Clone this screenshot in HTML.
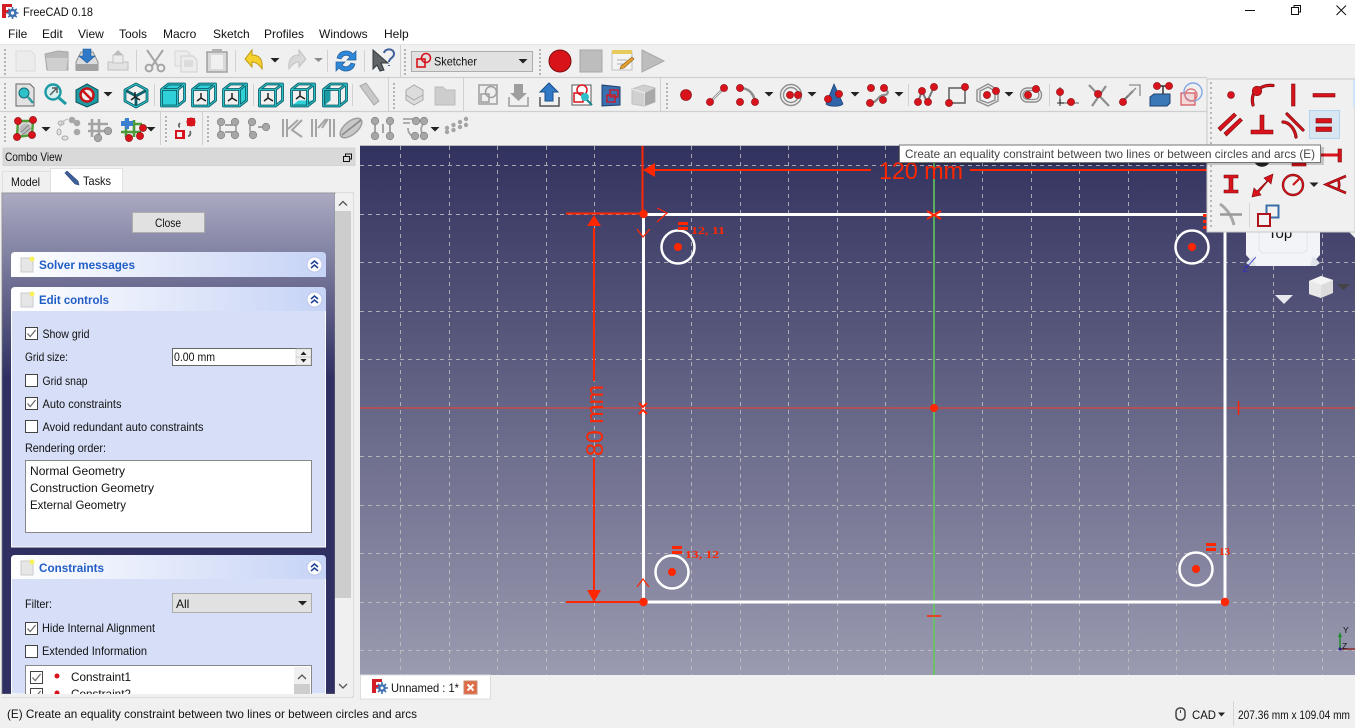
<!DOCTYPE html>
<html><head><meta charset="utf-8"><title>FreeCAD 0.18</title>
<style>
html,body{margin:0;padding:0;background:#f0f0f0;width:1355px;height:728px;overflow:hidden}
svg{display:block;position:absolute;left:0;top:0}
text{font-family:"Liberation Sans",sans-serif;font-size:12px;fill:#111}
.m{font-size:12px}
.l{font-size:12px}
.t{font-size:11.5px;font-weight:bold;fill:#215dc6}
.rd{fill:#d8131b;stroke:#7d0b10;stroke-width:.6}
</style></head><body>
<svg width="1355" height="728" viewBox="0 0 1355 728" xmlns="http://www.w3.org/2000/svg">
<defs>
<linearGradient id="vp" x1="0" y1="0" x2="0" y2="1"><stop offset="0" stop-color="#32325f"/><stop offset="1" stop-color="#9a9ab0"/></linearGradient>
<linearGradient id="tp" x1="0" y1="0" x2="0" y2="1"><stop offset="0" stop-color="#aaaac2"/><stop offset=".37" stop-color="#2f2f62"/><stop offset="1" stop-color="#2f2f62"/></linearGradient>
<linearGradient id="hd" x1="0" y1="0" x2="1" y2="0"><stop offset="0" stop-color="#fff"/><stop offset="1" stop-color="#c6d3f6"/></linearGradient>
<clipPath id="cl"><rect x="26" y="666" width="268" height="28"/></clipPath>
<clipPath id="nav"><rect x="1240" y="232" width="90" height="40"/></clipPath>

<g id="dot"><circle r="5.7" fill="#d8131b" stroke="#8a0b10" stroke-width=".8"/></g>
<g id="arw"><path d="M-4.500-2H4.500L0 2.500Z" fill="#222"/></g>
<g id="grip" fill="#b4b4b4"><rect x="0" y="0" width="2" height="2"/><rect x="0" y="4" width="2" height="2"/><rect x="0" y="8" width="2" height="2"/><rect x="0" y="12" width="2" height="2"/><rect x="0" y="16" width="2" height="2"/><rect x="0" y="20" width="2" height="2"/><rect x="0" y="24" width="2" height="2"/></g>

<g id="cubeS"><path d="M-11.500-5.500L-4.500-11H11.500V5.500L4.500 11H-11.500ZM-11.500-5.500H4.500V11M4.500-5.500L11.500-11" fill="none" stroke="#0d5f67" stroke-width="2.800" stroke-linejoin="round"/><path d="M-11.500-5.500L-4.500-11H11.500V5.500L4.500 11H-11.500ZM-11.500-5.500H4.500V11M4.500-5.500L11.500-11" fill="none" stroke="#2ac2ca" stroke-width="1.100" stroke-linejoin="round"/></g>
<g id="cdot" fill="none" stroke="#222" stroke-width="1.500"><path d="M-3 0L-7 3M-3 0V-5M-3 0L2 3"/></g>
<g id="ball"><circle r="3.600" fill="#d8131b" stroke="#8a0b10" stroke-width=".6"/></g>
<g id="gball"><circle r="3.800" fill="#a6a6a6" stroke="#7e7e7e" stroke-width=".6"/></g>
<g id="chev" fill="none" stroke="#1c3f94" stroke-width="1.500"><circle r="7.500" fill="#fff" stroke="#b9c6ea" stroke-width="1"/><path d="M-3.500-.5L0-3.500 3.500-.5M-3.500 3.500L0 .5 3.500 3.500"/></g>
<g id="note"><rect x="0" y="2" width="12" height="14" fill="#e6e6e6" stroke="#cacaca"/><circle cx="11" cy="3" r="2.500" fill="#f7f15a"/></g>
<g id="cbox"><rect x=".5" y=".5" width="12" height="12" fill="#fff" stroke="#444"/></g>
<g id="cchk"><rect x=".5" y=".5" width="12" height="12" fill="#fff" stroke="#444"/><path d="M2.500 6.500L5.200 9.600 10.600 3" fill="none" stroke="#666" stroke-width="1.200"/></g>
</defs>

<!-- base / title / menu -->
<rect width="1355" height="728" fill="#f0f0f0"/>
<rect width="1355" height="44" fill="#fff"/>
<path d="M2 4H12V7H6V10H10V13H6V18H2Z" fill="#d21f26"/>
<path d="M12.500 7V19M6.500 13H18.500M8.300 8.800L16.700 17.200M16.700 8.800L8.300 17.200" stroke="#3f6fb0" stroke-width="1.600"/><circle cx="12.500" cy="13" r="4.300" fill="#3f6fb0"/><circle cx="12.500" cy="13" r="1.700" fill="#fff"/>
<text x="23" y="16" class="m" textLength="70" lengthAdjust="spacingAndGlyphs">FreeCAD 0.18</text>
<path d="M1245 10.500H1255" stroke="#111"/>
<path d="M1291.500 7.500H1298.500V14.500H1291.500ZM1294 7.500V5.500H1300.500V12H1298.500" fill="none" stroke="#111"/>
<path d="M1336.500 5.500L1346 15M1346 5.500L1336.500 15" stroke="#111"/>
<text x="8" y="38" class="m">File</text><text x="42" y="38" class="m">Edit</text><text x="78" y="38" class="m">View</text><text x="119" y="38" class="m">Tools</text><text x="163" y="38" class="m">Macro</text><text x="213" y="38" class="m">Sketch</text><text x="264" y="38" class="m">Profiles</text><text x="319" y="38" class="m">Windows</text><text x="384" y="38" class="m">Help</text>

<!-- toolbars bg -->
<rect y="44" width="1355" height="101" fill="#f0f0f0"/>
<path d="M0 44.500H1355" stroke="#e6e6e6"/>
<path d="M0 77.500H1207M0 111.500H1207" stroke="#cfcfcf" stroke-width="1.200"/>
<path d="M400.500 45V77M388.500 78V111" stroke="#d0d0d0"/>
<path d="M160.500 112V145M202.500 112V145M463.500 78V111M660.500 78V111" stroke="#d0d0d0"/>
<path d="M136.500 50V72M235.500 50V72M327.500 50V72M364.500 50V72M154.500 84V106M253.500 84V106M352.500 84V106M908.500 84V106M1049.500 84V106" stroke="#d0d0d0"/>
<use href="#grip" x="4" y="49"/><use href="#grip" x="404" y="49"/><use href="#grip" x="539" y="49"/>
<use href="#grip" x="4" y="83"/><use href="#grip" x="393" y="83"/><use href="#grip" x="666" y="83"/>
<use href="#grip" x="4" y="116"/><use href="#grip" x="165" y="116"/><use href="#grip" x="207" y="116"/>

<!-- row 1 -->
<path d="M16 51H31L35 55V71H16Z" fill="#ececec" stroke="#dcdcdc"/>
<path d="M45 54L58 51 68 52V70H47Z" fill="#b9b9b9" stroke="#a8a8a8"/><path d="M46 58H68L66 70H48Z" fill="#cfcfcf"/>
<path d="M76 62L81 52H93L98 62V70H76Z" fill="#dcdcdc" stroke="#8e8e8e"/><rect x="76" y="64" width="22" height="7" fill="#a2a2a2"/><path d="M83 49H91V56H95L87 63 79 56H83Z" fill="#2f79c7" stroke="#1d5a9c" stroke-width=".6"/>
<path d="M108 62H128V70H108Z" fill="#e2e2e2" stroke="#c0c0c0"/><path d="M113 63V55H123V63Z" fill="#ececec" stroke="#c4c4c4"/><path d="M118 50L113 55H123Z" fill="#bcbcbc"/>
<g fill="none" stroke="#a6a6a6" stroke-width="2"><path d="M147 50L158 66M163 50L152 66"/><circle cx="149" cy="68" r="3.400"/><circle cx="161" cy="68" r="3.400"/></g>
<path d="M175 51H187L190 54V66H175Z" fill="#ececec" stroke="#d6d6d6"/><path d="M181 56H193L197 60V72H181Z" fill="#ececec" stroke="#d0d0d0"/><rect x="184" y="60" width="9" height="7" fill="#dcdcdc"/>
<rect x="207" y="52" width="20" height="20" fill="#d8d8d8" stroke="#a0a0a0" stroke-width="1.500"/><rect x="211" y="55" width="12" height="14" fill="#f0f0f0"/><rect x="212" y="49" width="10" height="4" fill="#b2b2b2"/>
<path d="M245 59L252 50V55C260 55 263 60 262 69 259 64 256 62 252 62V67Z" fill="#f4d12e" stroke="#bf9a15"/>
<use href="#arw" x="275" y="60"/>
<path d="M306 59L299 50V55C291 55 288 60 289 69 292 64 295 62 299 62V67Z" fill="#d8d8d8" stroke="#c2c2c2"/>
<path d="M314 58H323L318.500 62Z" fill="#8c8c8c"/>
<path d="M337 58C339 50 349 49 353 54L356 51V60H347L350 57C347 54 343 55 341 59ZM355 64C353 72 343 73 339 68L336 71V62H345L342 65C345 68 349 67 351 63Z" fill="#2f87d8" stroke="#1f5e9b" stroke-width=".7"/>
<path d="M373 50L388 63 381 63 384 70 380 71 377 65 373 69Z" fill="#5f6468" stroke="#33383c"/>
<path d="M384 53C385 48 394 48 394 54 394 58 389 58 389 62M389 65V66" fill="none" stroke="#3d5f9a" stroke-width="2"/>

<rect x="411.500" y="51.500" width="121" height="20" fill="#e1e1e1" stroke="#adadad"/>
<g fill="none" stroke="#d8131b" stroke-width="1.600"><rect x="417" y="59" width="8" height="8"/><circle cx="426" cy="58" r="4.500"/></g>
<text x="434" y="65.500" class="l" textLength="43" lengthAdjust="spacingAndGlyphs">Sketcher</text>
<use href="#arw" x="523" y="61"/>
<circle cx="560" cy="61" r="11" fill="#d9131a" stroke="#7d0b10"/>
<rect x="580" y="50" width="22" height="22" fill="#bdbdbd" stroke="#a8a8a8"/>
<path d="M612 52H632V70H612Z" fill="#f4f4f4" stroke="#c0c0c0"/><path d="M612 50H632V54H612Z" fill="#e7ca5c"/><path d="M617 60H627M617 64H623" stroke="#b0b0b0"/><path d="M621 66L632 57 634 59 624 68 620 69Z" fill="#e3a02f" stroke="#8b5e17" stroke-width=".6"/>
<path d="M642 50L664 61 642 72Z" fill="#bdbdbd" stroke="#a8a8a8"/>

<!-- row 2 -->
<path d="M16 84H30L34 88V106H16Z" fill="#e2e2e2" stroke="#666"/><circle cx="24" cy="93" r="5" fill="#2fc1c8" stroke="#0e6a72"/><path d="M28 97L33 103" stroke="#2b9aa1" stroke-width="2.500"/>
<circle cx="53" cy="92" r="7.500" fill="#d8eef0" stroke="#1a9aa3" stroke-width="2.400"/><path d="M50 95L56 89M52 88H57V93" stroke="#555" fill="none" stroke-width="1.400"/><path d="M59 98L66 104" stroke="#1a9aa3" stroke-width="3"/>
<path d="M87 84L98 90V102L87 107 76 102V90Z" fill="#1d9aa3" stroke="#0c555b"/><circle cx="87" cy="95" r="6.500" fill="#eee" stroke="#c81319" stroke-width="2.500"/><path d="M82.500 90.500L91.500 99.500" stroke="#c81319" stroke-width="2.500"/>
<use href="#arw" x="108" y="94"/>
<g fill="none" stroke-linejoin="round"><path d="M136 84L147 90V101L136 107 125 101V90ZM125 90L136 96 147 90M136 96V107" stroke="#0d5f67" stroke-width="2.800"/><path d="M136 84L147 90V101L136 107 125 101V90Z" stroke="#2ac2ca" stroke-width="1.100"/></g><use href="#cdot" x="138" y="97"/>
<g transform="translate(173,95)"><path d="M-11.500-5.500H4.500V11H-11.500Z" fill="#2fd0d8"/><path d="M-11.500-5.500L-4.500-11H11.500L4.500-5.500Z" fill="#2fd0d8"/><use href="#cubeS"/></g>
<g transform="translate(204,95)"><path d="M-11.500-5.500L-4.500-11H11.500L4.500-5.500Z" fill="#2fd0d8"/><use href="#cubeS"/><use href="#cdot" x="0" y="3"/></g>
<g transform="translate(235,95)"><path d="M4.500-5.500L11.500-11V5.500L4.500 11Z" fill="#2fd0d8"/><use href="#cubeS"/><use href="#cdot" x="0" y="3"/></g>
<g transform="translate(271,95)"><use href="#cubeS"/><use href="#cdot" x="0" y="3"/></g>
<g transform="translate(303,95)"><path d="M-11.500 11L-4.500 5.500H11.500L4.500 11Z" fill="#2fd0d8"/><use href="#cubeS"/><use href="#cdot" x="0" y="1"/></g>
<g transform="translate(335,95)"><path d="M-11.500-5.500L-4.500-11V5.500L-11.500 11Z" fill="#1a9aa3"/><use href="#cubeS"/></g>
<path d="M360 86L366 83 379 101 374 105Z" fill="#c8c8c8" stroke="#a8a8a8"/>
<path d="M406 90L414 85 423 90V100L414 105 406 100Z" fill="#dcdcdc" stroke="#aaa"/><path d="M406 95L414 100 423 95" fill="none" stroke="#aaa"/>
<path d="M435 87H443L446 90H455V105H435Z" fill="#cdcdcd" stroke="#bbb"/>
<g fill="none" stroke="#9e9e9e" stroke-width="1.500"><path d="M479 85H497V104H479Z" fill="#eee"/><circle cx="491" cy="92" r="5.500"/><rect x="481" y="94" width="8" height="8"/></g>
<path d="M514 84H523V93H527L518.500 101 510 93H514Z" fill="#9e9e9e"/><path d="M509 97V106H528V97" fill="none" stroke="#9e9e9e" stroke-width="1.500"/>
<path d="M545 101V92H540L549 83 558 92H553V101Z" fill="#2f79c7" stroke="#1a4f8a"/><path d="M540 97V106H559V97" fill="none" stroke="#555" stroke-width="1.500"/>
<rect x="572" y="85" width="19" height="20" fill="#fff" stroke="#555"/><rect x="574" y="93" width="9" height="9" fill="none" stroke="#d8131b" stroke-width="1.500"/><circle cx="582" cy="90" r="5" fill="none" stroke="#d8131b" stroke-width="1.500"/><circle cx="585" cy="97" r="4" fill="#2fc1c8"/><path d="M587 100L592 105" stroke="#14868d" stroke-width="2"/>
<path d="M602 85L620 87V105L602 106Z" fill="#3a6fb0" stroke="#1c3f6e"/><rect x="607" y="95" width="8" height="7" fill="none" stroke="#d8131b" stroke-width="1.300"/><rect x="610" y="90" width="8" height="7" fill="none" stroke="#d8131b" stroke-width="1.300"/>
<path d="M632 89L644 85 655 88V102L644 106 632 104Z" fill="#d0d0d0" stroke="#c0c0c0"/><path d="M632 89L645 93V106" fill="none" stroke="#eee"/><path d="M645 93L655 88V102L645 106Z" fill="#a8a8a8"/>
<circle cx="686" cy="95" r="5.500" class="rd"/>
<path d="M710 102L724 88" stroke="#8d8d8d" stroke-width="2.600"/><path d="M710 102L724 88" stroke="#f4f4f4" stroke-width=".8"/><use href="#ball" x="710" y="102"/><use href="#ball" x="724" y="88"/>
<path d="M740 88C749 88 754 94 755 102" fill="none" stroke="#8d8d8d" stroke-width="2.600"/><use href="#ball" x="740" y="88"/><use href="#ball" x="755" y="102"/><use href="#ball" x="740" y="102"/>
<use href="#arw" x="769" y="94"/>
<g fill="none" stroke="#8d8d8d"><circle cx="791" cy="95" r="10.500" stroke-width="1.400"/><circle cx="791" cy="95" r="7.500" stroke-width="1.400"/></g><use href="#ball" x="790" y="95"/><use href="#ball" x="798" y="95"/>
<use href="#arw" x="812" y="94"/>
<path d="M834 84L826 104C830 107 840 107 843 104Z" fill="#2f65a8" stroke="#1c4478" stroke-width=".8"/><use href="#ball" x="828" y="99"/><use href="#ball" x="839" y="94"/>
<use href="#arw" x="855" y="94"/>
<path d="M871 103C878 102 878 95 884 95 889 95 889 90 884 89" fill="none" stroke="#8d8d8d" stroke-width="2.200"/><use href="#ball" x="871" y="88"/><use href="#ball" x="884" y="88"/><use href="#ball" x="870" y="103"/><use href="#ball" x="883" y="100"/>
<use href="#arw" x="899" y="94"/>
<path d="M918 102L922 91 927 102 934 87" fill="none" stroke="#777" stroke-width="2"/><use href="#ball" x="918" y="102"/><use href="#ball" x="922" y="91"/><use href="#ball" x="928" y="102"/><use href="#ball" x="934" y="87"/>
<rect x="949" y="88" width="16" height="15" fill="none" stroke="#666" stroke-width="1.600"/><use href="#ball" x="949" y="103"/><use href="#ball" x="965" y="87"/>
<path d="M988 84L998 90V101L988 106 977 101V90Z" fill="none" stroke="#8d8d8d" stroke-width="1.400"/><path d="M988 87L995 91V100L988 103 980 100V91Z" fill="none" stroke="#8d8d8d" stroke-width="1.400"/><use href="#ball" x="987" y="95"/><use href="#ball" x="996" y="91"/>
<use href="#arw" x="1009" y="94"/>
<rect x="1020.500" y="88" width="21" height="14" rx="7" fill="none" stroke="#8d8d8d" stroke-width="1.400"/><rect x="1023" y="90.500" width="16" height="9" rx="4.500" fill="none" stroke="#8d8d8d" stroke-width="1.200"/><use href="#ball" x="1028" y="95"/><use href="#ball" x="1036" y="89"/>
<path d="M1060 87V103H1079" fill="none" stroke="#8d8d8d" stroke-width="1.600"/><use href="#ball" x="1060" y="92"/><use href="#ball" x="1071" y="102"/><path d="M1060 99V106M1057 103H1064" stroke="#333"/>
<path d="M1089 85L1109 106M1106 86L1092 106" stroke="#8d8d8d" stroke-width="2.200"/><use href="#ball" x="1098" y="94"/>
<path d="M1124 100L1133 91" stroke="#777" stroke-width="2.200"/><use href="#ball" x="1123" y="102"/><path d="M1129 85H1140V96M1136 88L1128 96" fill="none" stroke="#8d8d8d" stroke-width="1.300"/>
<path d="M1150 97L1154 94H1170V103L1167 106H1150Z" fill="#3a78b8" stroke="#1c3f6e"/><path d="M1157 86H1170M1163 86V94" stroke="#333" stroke-width="1.500"/><use href="#ball" x="1157" y="86"/><use href="#ball" x="1169" y="86"/>
<g opacity=".85"><rect x="1181" y="93" width="14" height="12" fill="#f5d6d6" stroke="#c9141b"/><circle cx="1193" cy="92" r="9" fill="none" stroke="#6f9be0" stroke-width="1.400"/><circle cx="1191" cy="95" r="6" fill="none" stroke="#d9656a" stroke-width="1.400"/></g>

<!-- row 3 -->
<path d="M18 121L33 121 32 135 17 137Z" fill="#d8d8d8" stroke="#4f9e36" stroke-width="2.400"/><ellipse cx="25" cy="129" rx="6" ry="5" fill="#bcbcbc" transform="rotate(-40 25 129)"/><path d="M21 132L29 125M22 135L31 128" stroke="#888"/><use href="#ball" x="18" y="121"/><use href="#ball" x="33" y="120"/><use href="#ball" x="17" y="137"/><use href="#ball" x="32" y="135"/>
<use href="#arw" x="46" y="129"/>
<g fill="#e4e4e4" stroke="#aaa"><ellipse cx="61" cy="123" rx="3" ry="2"/><ellipse cx="59" cy="132" rx="2" ry="3"/><ellipse cx="65" cy="138" rx="3" ry="2"/><circle cx="72" cy="120" r="2.800" fill="#a6a6a6"/><circle cx="77" cy="123" r="2.800" fill="#a6a6a6"/><circle cx="77" cy="132" r="2.800" fill="#a6a6a6"/></g><path d="M60 127C61 122 64 120 68 119" fill="none" stroke="#bbb"/>
<path d="M92 119V137M99 119V137M88 124H108M88 131H108" stroke="#a4a4a4" stroke-width="2.600"/><use href="#gball" x="108" y="131"/><use href="#gball" x="98" y="138"/>
<path d="M121 124H142M121 132H141M126 119V137M134 120V137" stroke="#4c9b3a" stroke-width="2.600"/><path d="M125 118H129V121H133V126H129V129H125V126H121V121H125Z" fill="#3b7fd0"/><use href="#ball" x="140" y="136"/><use href="#ball" x="143" y="128"/><use href="#ball" x="129" y="138"/>
<use href="#arw" x="151" y="129"/>
<rect x="187" y="118" width="8" height="8" fill="#c9141b" opacity=".9"/><circle cx="191" cy="122" r="4.500" fill="#d8131b"/><rect x="175" y="130" width="10" height="9" fill="#d8131b"/><rect x="177" y="132" width="5" height="5" fill="#f0f0f0"/><path d="M180 123C178 125 179 127 180 127M190 131C191 134 190 136 188 136" fill="none" stroke="#666" stroke-width="1.800"/>
<g fill="none" stroke="#a4a4a4" stroke-width="1.800"><path d="M220 120V136M236 120V136"/><path d="M225 125H235M225 132H235" stroke="#555" stroke-width="1"/></g><use href="#gball" x="221" y="122"/><use href="#gball" x="235" y="122"/><use href="#gball" x="221" y="135"/><use href="#gball" x="235" y="135"/>
<g fill="none" stroke="#a4a4a4" stroke-width="1.800"><path d="M251 122C249 128 250 133 253 136"/><path d="M258 127H266" stroke="#555" stroke-width="1"/></g><use href="#gball" x="252" y="122"/><use href="#gball" x="253" y="135"/><use href="#gball" x="266" y="127"/>
<path d="M283 119V137M287 119V137M302 120L292 130 302 137" fill="none" stroke="#a4a4a4" stroke-width="2"/><path d="M298 120L288 129" stroke="#a4a4a4" stroke-width="2"/>
<path d="M312 119V137M316 119V137M330 119V137M334 119V137M322 128L328 119M318 128L326 119" fill="none" stroke="#a4a4a4" stroke-width="2"/>
<ellipse cx="351" cy="128" rx="13" ry="6.500" transform="rotate(-40 351 128)" fill="#c8c8c8" stroke="#9e9e9e" stroke-width="1.500"/><path d="M342 135L361 120M348 130L355 125" stroke="#888" stroke-width="1.500"/>
<path d="M375 122V136M390 122V136M383 124V133" fill="none" stroke="#a4a4a4" stroke-width="2"/><use href="#gball" x="375" y="121"/><use href="#gball" x="390" y="121"/><use href="#gball" x="375" y="136"/><use href="#gball" x="390" y="136"/>
<path d="M403 119H413M403 123H410M408 128C408 132 410 135 413 136M423 124C420 128 421 133 424 136" fill="none" stroke="#a4a4a4" stroke-width="1.800"/><use href="#gball" x="416" y="121"/><use href="#gball" x="424" y="121"/><use href="#gball" x="415" y="136"/><use href="#gball" x="424" y="136"/>
<use href="#arw" x="435" y="129"/>
<g fill="#a4a4a4"><circle cx="447" cy="132" r="2.200"/><circle cx="447" cy="128" r="2.200"/><circle cx="453.500" cy="130" r="2.200"/><circle cx="453.500" cy="125" r="2.200"/><circle cx="460" cy="127" r="2.200"/><circle cx="460" cy="122" r="2.200"/><circle cx="466" cy="125" r="2.200"/><circle cx="466" cy="119" r="2.200"/></g>

<!-- viewport -->
<rect x="360" y="146" width="995" height="529" fill="url(#vp)"/>
<path d="M360 145.500H1355" stroke="#bdbdbd"/>
<g stroke="#c4c4c4" stroke-width="1" stroke-dasharray="4 4" opacity=".8">
<path d="M400.500 146V675M449.500 146V675M497.500 146V675M546.500 146V675M594.500 146V675M691.500 146V675M740.500 146V675M788.500 146V675M837.500 146V675M885.500 146V675M982.500 146V675M1031.500 146V675M1079.500 146V675M1128.500 146V675M1176.500 146V675M1273.500 146V675M1322.500 146V675M643.500 602V675M1225.500 602V675"/>
<path d="M360 165.500H1355M360 214.500H643M1225 214.500H1355M360 262.500H1355M360 311.500H1355M360 359.500H1355M360 456.500H1355M360 505.500H1355M360 553.500H1355M360 602.500H643M1225 602.500H1355M360 650.500H1355"/>
</g>
<path d="M360 408H1355" stroke="#d9443a" stroke-width="1.200"/>
<path d="M934 163V675" stroke="#5fca5a" stroke-width="1.600"/>
<path d="M1238.500 401V415" stroke="#ff2600" stroke-width="1.500"/>
<path d="M927 616H941" stroke="#ff2600" stroke-width="1.500"/>
<!-- sketch -->
<rect x="643.500" y="214.500" width="581.500" height="387.500" fill="none" stroke="#fff" stroke-width="3"/>
<g fill="none" stroke="#fff" stroke-width="2.500"><circle cx="678" cy="247" r="16.500"/><circle cx="1192" cy="247" r="16.500"/><circle cx="672" cy="572" r="16.500"/><circle cx="1196" cy="569" r="16.500"/></g>
<g fill="#ff2600"><circle cx="678" cy="247" r="4"/><circle cx="1192" cy="247" r="4"/><circle cx="672" cy="572" r="4"/><circle cx="1196" cy="569" r="4"/><circle cx="643.500" cy="214" r="4.200"/><circle cx="643.500" cy="602" r="4.200"/><circle cx="1225" cy="602" r="4.200"/><circle cx="934" cy="408" r="4"/></g>
<!-- dimensions -->
<g stroke="#ff2600" stroke-width="2" fill="none">
<path d="M642.500 146V214M566 213.500H643M566 602H643M594 228V381M594 458V590M655 170H871M970 170H1208"/>
</g>
<path d="M643 170L655 163V177Z" fill="#ff2600"/>
<path d="M594 215L587 226H601Z" fill="#ff2600"/>
<path d="M594 602L587 590H601Z" fill="#ff2600"/>
<text x="879" y="179" textLength="84" lengthAdjust="spacingAndGlyphs" style="font-size:24px;fill:#ff2600">120 mm</text>
<text transform="translate(603,456) rotate(-90)" textLength="71" lengthAdjust="spacingAndGlyphs" style="font-size:24px;fill:#ff2600">80 mm</text>
<!-- constraints -->
<g fill="none" stroke="#ff2600" stroke-width="1.200">
<path d="M657 208L667 213 657 222"/><path d="M637 229L643 237 650 229"/><path d="M637 587L643 579 649 587"/>
<path d="M927 211L934 215 927 219M941 211L934 215 941 219" stroke-width="2"/>
<path d="M639 403L643 407 647 403M639 414L643 410 647 414" stroke-width="2"/>
</g>
<g fill="#ff2600"><rect x="678" y="222" width="10" height="3"/><rect x="678" y="227" width="10" height="3"/><rect x="672" y="546" width="10" height="3"/><rect x="672" y="551" width="10" height="3"/><rect x="1206" y="543" width="10" height="3"/><rect x="1206" y="548" width="10" height="3"/></g>
<text x="691" y="234" style="font-family:'Liberation Serif',serif;font-size:11px;font-weight:bold;fill:#ff2600" textLength="34" lengthAdjust="spacingAndGlyphs">12, 11</text>
<text x="685" y="558" style="font-family:'Liberation Serif',serif;font-size:11px;font-weight:bold;fill:#ff2600" textLength="34" lengthAdjust="spacingAndGlyphs">13, 12</text>
<text x="1219" y="555" style="font-family:'Liberation Serif',serif;font-size:11px;font-weight:bold;fill:#ff2600">13</text>
<!-- navicube -->
<path d="M1246 232H1320V255L1310 266H1256L1246 255Z" fill="#f3f4f8"/><path d="M1253 256L1246 263 1250 266H1256ZM1313 256L1320 263 1316 266H1310Z" fill="#dfe3ea"/>
<path d="M1259 232V250L1263 253H1303L1307 250V232" fill="none" stroke="#e0e3ea"/>
<text x="1268" y="238" style="font-size:15px" clip-path="url(#nav)">Top</text>
<path d="M1256 257L1246 268" stroke="#2a2ac8" stroke-width=".8"/><text x="1243" y="272" style="font-size:8px;fill:#2a2ac8">Z</text>
<path d="M1275 295H1293L1284 304Z" fill="#e8e9ef"/>
<path d="M1309 281L1321 276 1333 280V293L1321 298 1309 294Z" fill="#dcdcdc"/><path d="M1309 281L1321 285 1333 280 1321 276Z" fill="#f4f4f4"/><path d="M1321 285V298L1309 294V281Z" fill="#e8e8e8"/>
<path d="M1337 284H1350L1343.500 290Z" fill="#444"/>
<path d="M1349 232H1355V238Z" fill="#eee"/>
<!-- axis -->
<path d="M1340 649V635" stroke="#1f8a2a" stroke-width="1.500"/><path d="M1338 637L1340 632 1342 637Z" fill="#1f8a2a"/><path d="M1340 649H1355" stroke="#8a2a2a" stroke-width="1.500"/><circle cx="1340" cy="649" r="1.500" fill="#22228a"/>
<text x="1343" y="633" style="font-size:8.500px">Y</text><text x="1342" y="649" style="font-size:8.500px">Z</text>

<!-- red bits beside popup -->
<rect x="1203" y="214" width="5" height="3" fill="#ff2600"/><rect x="1203" y="220" width="5" height="3" fill="#ff2600"/><rect x="1203" y="226" width="5" height="3" fill="#ff2600"/>

<!-- popup -->
<rect x="1207" y="79" width="148" height="153" fill="#f0f0f0" stroke="#c8c8c8"/>
<g fill="#b8b8b8"><rect x="1210" y="82" width="2" height="2"/><rect x="1210" y="87" width="2" height="2"/><rect x="1210" y="92" width="2" height="2"/><rect x="1210" y="97" width="2" height="2"/><rect x="1210" y="102" width="2" height="2"/><rect x="1210" y="107" width="2" height="2"/><rect x="1210" y="112" width="2" height="2"/><rect x="1210" y="117" width="2" height="2"/><rect x="1210" y="122" width="2" height="2"/><rect x="1210" y="127" width="2" height="2"/><rect x="1210" y="132" width="2" height="2"/><rect x="1210" y="137" width="2" height="2"/><rect x="1210" y="142" width="2" height="2"/><rect x="1210" y="165" width="2" height="2"/><rect x="1210" y="170" width="2" height="2"/><rect x="1210" y="175" width="2" height="2"/><rect x="1210" y="180" width="2" height="2"/><rect x="1210" y="185" width="2" height="2"/><rect x="1210" y="190" width="2" height="2"/><rect x="1210" y="195" width="2" height="2"/><rect x="1210" y="200" width="2" height="2"/><rect x="1210" y="205" width="2" height="2"/><rect x="1210" y="210" width="2" height="2"/><rect x="1210" y="215" width="2" height="2"/><rect x="1210" y="220" width="2" height="2"/><rect x="1210" y="225" width="2" height="2"/></g>
<rect x="1353" y="80" width="2" height="28" fill="#cfe4f6"/>
<circle cx="1231" cy="95" r="3.500" class="rd"/>
<path d="M1253 105C1251 96 1254 90 1260 88 1264 86 1267 85 1273 85.500" fill="none" stroke="#7d0b10" stroke-width="3.200" stroke-linecap="round"/><path d="M1253 105C1251 96 1254 90 1260 88 1264 86 1267 85 1273 85.500" fill="none" stroke="#d8131b" stroke-width="1.800" stroke-linecap="round"/><circle cx="1257" cy="91" r="4.800" class="rd"/>
<rect x="1291.500" y="84" width="3.500" height="22" class="rd"/>
<rect x="1313" y="93.500" width="22" height="3.500" class="rd"/>
<path d="M1220 129L1236 114 1238.500 116.500 1222.500 132ZM1226 134L1242 119 1244.500 121.500 1228.500 137Z" class="rd" transform="translate(-2,-1)"/>
<path d="M1260 115H1264V130H1273V134H1251V130H1260Z" class="rd"/>
<g fill="none" stroke-linecap="round"><path d="M1287 114L1303 130M1283 122C1289 122 1295 129 1296 137" stroke="#7d0b10" stroke-width="3.200"/><path d="M1287 114L1303 130M1283 122C1289 122 1295 129 1296 137" stroke="#d8131b" stroke-width="1.800"/></g>
<rect x="1309.500" y="110.500" width="30" height="28" fill="#d8e6f2" stroke="#b4d4ee"/>
<rect x="1316" y="118.500" width="15.500" height="4.500" class="rd"/><rect x="1316" y="127" width="15.500" height="4.500" class="rd"/>
<!-- row 3 peeks -->
<path d="M1255 163C1258 168 1266 168 1269 163Z" fill="#222"/>
<rect x="1292" y="163" width="14" height="3" class="rd"/><path d="M1308 155H1340" stroke="#d8131b" stroke-width="3"/><rect x="1338" y="149" width="3.500" height="13" class="rd"/>
<path d="M1279.500 146V163" stroke="#d0d0d0"/>
<!-- row 4 -->
<path d="M1224 175H1238V178H1233V190H1238V193H1224V190H1229V178H1224Z" class="rd"/>
<path d="M1252 197L1254 188 1257 191 1267 181 1264 178 1273 174 1271 184 1268 181 1259 192 1261 195Z" class="rd" stroke-width=".6"/>
<g fill="none"><circle cx="1293" cy="185" r="10" stroke="#7d0b10" stroke-width="2.400"/><circle cx="1293" cy="185" r="10" stroke="#d8131b" stroke-width="1.300"/><path d="M1293 185L1300 178" stroke="#c9141b" stroke-width="2.200"/></g>
<use href="#arw" x="1314" y="184.500"/>
<g fill="none"><path d="M1346 176L1326 184.500 1346 193M1338 179C1339.500 183 1339.500 187 1338 190" stroke="#7d0b10" stroke-width="2.600"/><path d="M1346 176L1326 184.500 1346 193M1338 179C1339.500 183 1339.500 187 1338 190" stroke="#d8131b" stroke-width="1.300"/></g>
<!-- row 5 -->
<path d="M1220 204C1226 208 1232 216 1234 225" fill="none" stroke="#a8a8a8" stroke-width="3"/><path d="M1220 214.500H1242" stroke="#999" stroke-width="2.600"/>
<path d="M1249.500 203V227" stroke="#d4d4d4"/>
<rect x="1266.500" y="205.500" width="12" height="12" fill="#f2f2f2" stroke="#3b6ea8" stroke-width="2"/>
<rect x="1258" y="214" width="12" height="12" fill="#f2f2f2" stroke="#b0141a" stroke-width="2"/>

<!-- tooltip -->
<rect x="901" y="147" width="423" height="18" fill="#000" opacity=".18"/>
<rect x="899.500" y="145" width="421" height="17.500" fill="#fff" stroke="#767676"/>
<text x="905" y="158" textLength="410" lengthAdjust="spacingAndGlyphs" class="m" style="fill:#444">Create an equality constraint between two lines or between circles and arcs (E)</text>

<!-- left panel -->
<rect x="0" y="146" width="360" height="529" fill="#f0f0f0"/>
<rect x="3" y="148" width="352" height="17.500" fill="#d9d9d9" stroke="#c8c8c8" stroke-width=".6"/>
<text x="5" y="161" class="l" textLength="57" lengthAdjust="spacingAndGlyphs">Combo View</text>
<path d="M343.500 156.500H349.500V161.500H343.500ZM345.500 156.500V154H351.500V159H349.500" fill="none" stroke="#111"/>
<rect x="2.500" y="171.500" width="48" height="21" fill="#f0f0f0" stroke="#e0e0e0"/>
<text x="11" y="186" class="l" textLength="29" lengthAdjust="spacingAndGlyphs">Model</text>
<rect x="50.500" y="168.500" width="72" height="24" fill="#fff" stroke="#e0e0e0"/>
<path d="M65 173L67 171 78 181 79 185 75 184Z" fill="#3d5f9a" stroke="#2b4476" stroke-width=".6"/>
<text x="83" y="185" class="l" textLength="28" lengthAdjust="spacingAndGlyphs">Tasks</text>
<rect x="1.500" y="192.500" width="352" height="504" fill="#f0f0f0" stroke="#dcdcdc"/>
<rect x="2" y="193" width="333" height="501" fill="url(#tp)" stroke="#8a8a8a" stroke-width=".6"/>
<!-- main scrollbar -->
<rect x="335" y="194" width="17" height="500" fill="#f0f0f0"/>
<rect x="335" y="211" width="16" height="387" fill="#cdcdcd"/>
<path d="M339 205.500L343 201.500 347 205.500M339 684L343 688 347 684" fill="none" stroke="#555" stroke-width="1.300"/>
<!-- close -->
<rect x="132.500" y="212.500" width="72" height="20" fill="#e1e1e1" stroke="#adadad"/>
<text x="155" y="227" class="l" textLength="26" lengthAdjust="spacingAndGlyphs">Close</text>
<!-- solver -->
<path d="M11 277V256Q11 252 15 252H322Q326 252 326 256V277Z" fill="url(#hd)"/>
<use href="#note" x="21" y="256"/>
<text x="39" y="269" class="t" textLength="96" lengthAdjust="spacingAndGlyphs">Solver messages</text>
<use href="#chev" x="314.500" y="264.500"/>
<!-- edit controls -->
<rect x="11.500" y="310.500" width="314" height="236.500" fill="#d6dff7" stroke="#fff"/>
<path d="M11 311V291Q11 287 15 287H322Q326 287 326 291V311Z" fill="url(#hd)"/>
<use href="#note" x="21" y="291"/>
<text x="39" y="304" class="t" textLength="70" lengthAdjust="spacingAndGlyphs">Edit controls</text>
<use href="#chev" x="314.500" y="299.500"/>
<use href="#cchk" x="25" y="327"/><text x="42.500" y="338" class="l" textLength="47" lengthAdjust="spacingAndGlyphs">Show grid</text>
<text x="25" y="361" class="l" textLength="43" lengthAdjust="spacingAndGlyphs">Grid size:</text>
<rect x="172.500" y="348.500" width="139" height="17" fill="#fff" stroke="#666"/>
<text x="174" y="361" class="l" textLength="41" lengthAdjust="spacingAndGlyphs">0.00 mm</text>
<rect x="296" y="349" width="15" height="16" fill="#f0f0f0" stroke="#c8c8c8" stroke-width=".6"/><path d="M296 357H311" stroke="#c8c8c8"/><path d="M300.500 355L303.500 351.500 306.500 355Z" fill="#222"/><path d="M300.500 359L303.500 362.500 306.500 359Z" fill="#222"/>
<use href="#cbox" x="25" y="374"/><text x="42.500" y="385" class="l" textLength="45" lengthAdjust="spacingAndGlyphs">Grid snap</text>
<use href="#cchk" x="25" y="397"/><text x="42.500" y="408" class="l" textLength="79" lengthAdjust="spacingAndGlyphs">Auto constraints</text>
<use href="#cbox" x="25" y="420"/><text x="42.500" y="431" class="l" textLength="161" lengthAdjust="spacingAndGlyphs">Avoid redundant auto constraints</text>
<text x="25" y="452" class="l" textLength="81" lengthAdjust="spacingAndGlyphs">Rendering order:</text>
<rect x="25.500" y="460.500" width="286" height="72" fill="#fff" stroke="#888"/>
<text x="30" y="475" class="l" textLength="95" lengthAdjust="spacingAndGlyphs">Normal Geometry</text>
<text x="30" y="492" class="l" textLength="124" lengthAdjust="spacingAndGlyphs">Construction Geometry</text>
<text x="30" y="509" class="l" textLength="96" lengthAdjust="spacingAndGlyphs">External Geometry</text>
<!-- constraints panel -->
<rect x="11.500" y="578.500" width="314" height="115.500" fill="#d6dff7" stroke="#fff"/>
<path d="M11 579V559Q11 555 15 555H322Q326 555 326 559V579Z" fill="url(#hd)"/>
<use href="#note" x="21" y="559"/>
<text x="39" y="572" class="t" textLength="65" lengthAdjust="spacingAndGlyphs">Constraints</text>
<use href="#chev" x="314.500" y="567.500"/>
<text x="25" y="608" class="l" textLength="27" lengthAdjust="spacingAndGlyphs">Filter:</text>
<rect x="172.500" y="593.500" width="139" height="19" fill="#e1e1e1" stroke="#adadad"/>
<text x="176" y="608" class="l">All</text>
<use href="#arw" x="302.500" y="603"/>
<use href="#cchk" x="25" y="622"/><text x="42" y="632" class="l" textLength="113" lengthAdjust="spacingAndGlyphs">Hide Internal Alignment</text>
<use href="#cbox" x="25" y="645"/><text x="42" y="655" class="l" textLength="105" lengthAdjust="spacingAndGlyphs">Extended Information</text>
<rect x="25.500" y="665.500" width="286" height="30" fill="#fff" stroke="#888"/>
<g clip-path="url(#cl)">
<use href="#cchk" x="30" y="671"/><circle cx="57" cy="676" r="2.500" fill="#d8131b"/><text x="71" y="681" class="l" textLength="60" lengthAdjust="spacingAndGlyphs">Constraint1</text>
<use href="#cchk" x="30" y="688"/><circle cx="57" cy="693" r="2.500" fill="#d8131b"/><text x="71" y="698" class="l" textLength="60" lengthAdjust="spacingAndGlyphs">Constraint2</text>
</g>
<rect x="294" y="667" width="16" height="27" fill="#f0f0f0"/><rect x="294" y="684" width="16" height="10" fill="#cdcdcd"/>
<path d="M298 679L302 675 306 679" fill="none" stroke="#555" stroke-width="1.300"/>
<rect x="0" y="694" width="352" height="3" fill="#f0f0f0"/>
<path d="M1.500 697.500H353.500" stroke="#dcdcdc"/>

<!-- bottom tab -->
<rect x="360" y="675" width="995" height="53" fill="#f0f0f0"/>
<rect x="360.500" y="675" width="130" height="24" fill="#fff" stroke="#dcdcdc"/>
<path d="M372 679H382V682H376V685H381V688H376V693H372Z" fill="#d21f26"/>
<path d="M382 682V694M376 688H388M378 684L386 692M386 684L378 692" stroke="#3f6fb0" stroke-width="1.600"/><circle cx="382" cy="688" r="3.800" fill="#3f6fb0"/><circle cx="382" cy="688" r="1.500" fill="#fff"/>
<text x="391" y="692" class="l" textLength="68" lengthAdjust="spacingAndGlyphs">Unnamed : 1*</text>
<rect x="464" y="681" width="13" height="13" fill="#dd6b45" stroke="#c98a72"/><path d="M467.500 684.500L473.500 690.500M473.500 684.500L467.500 690.500" stroke="#fff" stroke-width="2"/>
<!-- status -->
<text x="7" y="718" class="l" textLength="410" lengthAdjust="spacingAndGlyphs">(E) Create an equality constraint between two lines or between circles and arcs</text>
<rect x="1176" y="708" width="9" height="12" rx="4" fill="none" stroke="#444" stroke-width="1.500"/><path d="M1180.500 710V713" stroke="#444"/>
<text x="1192" y="719" class="l" textLength="24" lengthAdjust="spacingAndGlyphs">CAD</text>
<path d="M1218 712.500H1225L1221.500 716.500Z" fill="#222"/>
<path d="M1233.500 701V726" stroke="#d6d6d6"/>
<text x="1238" y="719" class="l" textLength="112" lengthAdjust="spacingAndGlyphs">207.36 mm x 109.04 mm</text>
</svg>
</body></html>
